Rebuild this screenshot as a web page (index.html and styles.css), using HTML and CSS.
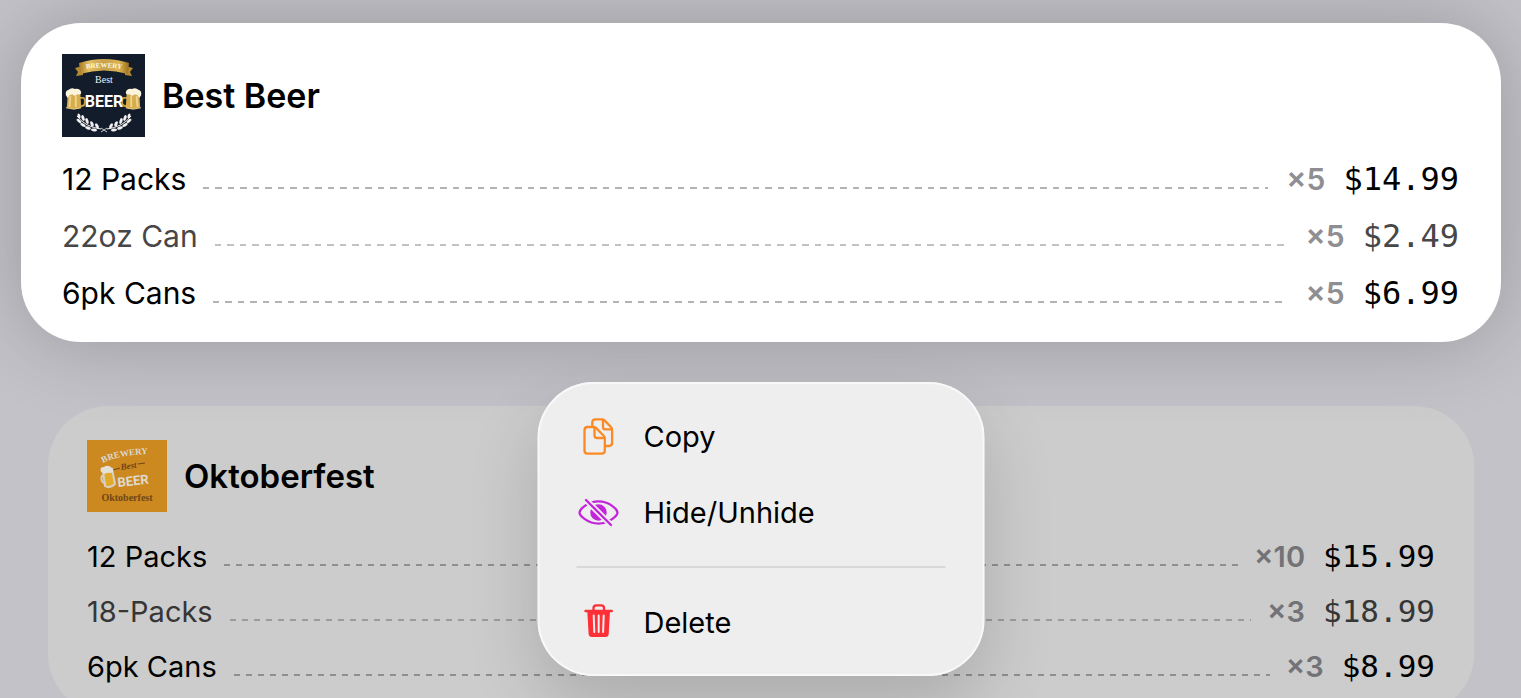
FILE: index.html
```html
<!DOCTYPE html>
<html lang="en">
<head>
<meta charset="utf-8">
<meta name="viewport" content="width=device-width, initial-scale=1">
<title>Best Beer</title>
<link rel="stylesheet" href="styles.css">
</head>
<body>
<main class="screen">
  <article class="card card-focused">
    <header class="card-header">
      <svg class="logo" viewBox="0 0 83 83" role="img" aria-label="Best Beer logo">
        <defs>
          <linearGradient id="gold" x1="0" x2="1">
            <stop offset="0" stop-color="#a87b25"/><stop offset=".2" stop-color="#e3bf62"/>
            <stop offset=".5" stop-color="#c9a14a"/><stop offset=".8" stop-color="#dcb452"/>
            <stop offset="1" stop-color="#9b6f1f"/>
          </linearGradient>
          <path id="ribbon-line" d="M16 17Q42 10 68 17"/>
          <g id="mug">
            <path d="M16 11h4q2 0 2 3v3q0 3-4 3h-2" fill="none" stroke="#c79b42" stroke-width="2"/>
            <path d="M3 6L17 5L18 22Q11 25 2 22Z" fill="#d6ad4e"/>
            <path d="M6 9L5 21M12 9V21" stroke="#efd68a" stroke-width="2"/>
            <path d="M1 22Q10 25 18 22" fill="none" stroke="#ecd28a" stroke-width="1"/>
            <path d="M1 8Q0 3 4 2Q7-1 11 1Q17 0 18 5Q18 8 14 7Q11 10 8 7L5 8L3 11Z" fill="#fbf5df"/>
          </g>
          <g id="laurel" fill="#f1f1f1">
            <path d="M0 2Q8 13 24 15" fill="none" stroke="#f1f1f1" stroke-width="1"/>
            <ellipse cx="2" cy="2" rx="1.4" ry="2.500" transform="rotate(-20 2 2)"/>
            <ellipse cx="2" cy="7" rx="3" ry="1.400" transform="rotate(40 2 7)"/>
            <ellipse cx="6" cy="4" rx="1.500" ry="3" transform="rotate(-20 6 4)"/>
            <ellipse cx="6" cy="11" rx="3" ry="1.500" transform="rotate(30 6 11)"/>
            <ellipse cx="10" cy="7" rx="1.500" ry="3" transform="rotate(-20 10 7)"/>
            <ellipse cx="11" cy="14" rx="3" ry="1.500" transform="rotate(20 11 14)"/>
            <ellipse cx="15" cy="10" rx="1.500" ry="3" transform="rotate(-25 15 10)"/>
            <ellipse cx="17" cy="16" rx="3" ry="1.400" transform="rotate(5 17 16)"/>
            <ellipse cx="20" cy="12" rx="1.500" ry="3" transform="rotate(-30 20 12)"/>
          </g>
        </defs>
        <rect width="83" height="83" fill="#131c2a"/>
        <path d="M13 14L21 12V21L14 22L16 18ZM71 14L63 12V21L70 22L68 18Z" fill="#b68a31"/>
        <path d="M17 9Q42 1 67 9L66 20Q42 13 18 20Z" fill="url(#gold)"/>
        <text class="logo-ribbon"><textPath href="#ribbon-line" startOffset="50%">BREWERY</textPath></text>
        <text class="logo-best" x="42" y="29">Best</text>
        <use href="#mug" transform="translate(3 34) scale(.9)"/>
        <use href="#mug" transform="translate(80 34) scale(-.9 .9)"/>
        <text class="logo-beer" x="42" y="53">BEER</text>
        <use href="#laurel" x="15" y="60"/>
        <use href="#laurel" transform="translate(69 60) scale(-1 1)"/>
        <path d="M39 78L45 74M45 78L39 74" stroke="#c9cdd1"/>
      </svg>
      <h2 class="card-title">Best Beer</h2>
    </header>
    <ul class="rows">
      <li class="row"><span class="name">12 Packs</span><span class="leader"></span><span class="qty">×5</span><span class="price">$14.99</span></li>
      <li class="row row-hidden"><span class="name">22oz Can</span><span class="leader"></span><span class="qty">×5</span><span class="price">$2.49</span></li>
      <li class="row"><span class="name">6pk Cans</span><span class="leader"></span><span class="qty">×5</span><span class="price">$6.99</span></li>
    </ul>
    <div class="menu" role="menu">
      <button class="menu-item" type="button" role="menuitem">
        <svg class="icon" viewBox="0 0 44 44" fill="none" stroke="#fb8a24" stroke-width="2.300" stroke-linejoin="round" aria-hidden="true">
          <path d="M15.800 13V8.500Q15.800 5.300 19 5.300H25.500Q27 5.300 28 6.400L34.500 13Q35.600 14.200 35.600 16V28.800Q35.600 32 32.400 32H28.500"/>
          <path d="M26.500 5.500V13Q26.500 15.400 29 15.400H35.500"/>
          <path d="M11.200 13H17Q18.600 13 19.700 14.100L27.200 21.800Q28.300 23 28.300 24.600V36.400Q28.300 39.600 25.100 39.600H11.200Q8 39.600 8 36.400V16.200Q8 13 11.200 13Z"/>
          <path d="M18 13.500V21.500Q18 24 20.500 24H28"/>
        </svg>
        <span>Copy</span>
      </button>
      <button class="menu-item" type="button" role="menuitem">
        <svg class="icon" viewBox="0 0 44 44" fill="none" aria-hidden="true">
          <path d="M3 22.500C3 19.500 11 11.400 22 11.400S41 19.500 41 22.500S33 33.600 22 33.600S3 25.500 3 22.500Z" stroke="#c324dc" stroke-width="2.300"/>
          <circle cx="22" cy="22.500" r="8.200" fill="#c324dc"/>
          <path d="M9 9.500L35 35.500" stroke="#eee" stroke-width="6"/>
          <path d="M9.500 10L34.500 35" stroke="#c324dc" stroke-width="2.300" stroke-linecap="round"/>
        </svg>
        <span>Hide/Unhide</span>
      </button>
      <hr class="menu-divider">
      <button class="menu-item" type="button" role="menuitem">
        <svg class="icon" viewBox="0 0 44 44" fill="none" aria-hidden="true">
          <path d="M17 11V8Q17 5.300 19.700 5.300H24.800Q27.500 5.300 27.500 8V11" stroke="#fd2f37" stroke-width="2.300"/>
          <path d="M9 11H35.300" stroke="#fd2f37" stroke-width="2.400" stroke-linecap="round"/>
          <path d="M10.800 11H33.500L32.200 33.700Q32 37 28.800 37H15.500Q12.300 37 12.100 33.700Z" fill="#fd2f37"/>
          <path d="M17.200 15.500L17.800 32M22.200 15.500V32M27.200 15.500L26.600 32" stroke="#eeeef0" stroke-width="2" stroke-linecap="round"/>
        </svg>
        <span>Delete</span>
      </button>
    </div>
  </article>

  <article class="card card-dimmed">
    <header class="card-header">
      <svg class="logo" viewBox="0 0 80 72" role="img" aria-label="Oktoberfest logo">
        <rect width="80" height="72" fill="#cb891f"/>
        <path id="arch" d="M16 23Q34 14 66 14" fill="none"/>
        <text class="okt-brewery"><textPath href="#arch">BREWERY</textPath></text>
        <path d="M26 30L33 28M51 24L58 23" stroke="#704518"/>
        <text class="okt-best" x="34" y="30" transform="rotate(-8 34 30)">Best</text>
        <text class="okt-beer" x="31" y="47" transform="rotate(-6 31 47)">BEER</text>
        <path d="M16 31L25 29L28 44Q23 49 18 46Z" fill="#e3a92a" stroke="#d6d1c4" stroke-width="2"/>
        <path d="M17 35Q13 36 15 41Q16 44 19 43" fill="none" stroke="#d6d1c4" stroke-width="2"/>
        <path d="M14 32Q12 27 17 27Q21 24 25 28Q28 31 24 33Q20 32 18 34Z" fill="#e4e0d6"/>
        <text class="okt-name" x="40" y="61">Oktoberfest</text>
      </svg>
      <h2 class="card-title">Oktoberfest</h2>
    </header>
    <ul class="rows">
      <li class="row"><span class="name">12 Packs</span><span class="leader"></span><span class="qty">×10</span><span class="price">$15.99</span></li>
      <li class="row row-hidden"><span class="name">18-Packs</span><span class="leader"></span><span class="qty">×3</span><span class="price">$18.99</span></li>
      <li class="row"><span class="name">6pk Cans</span><span class="leader"></span><span class="qty">×3</span><span class="price">$8.99</span></li>
    </ul>
  </article>
</main>
</body>
</html>
```
FILE: styles.css
```css
* {
  box-sizing: border-box;
}

body {
  margin: 0;
  height: 100vh;
  overflow: hidden;
  background: #c3c2c8;
  color: #000;
  font-family: Inter, "Liberation Sans", sans-serif;
}

.screen {
  display: flex;
  flex-direction: column;
  gap: 64px;
  padding: 23px 20px 0 21px;
}

.card {
  border-radius: 60px;
}

.card-focused {
  position: relative;
  z-index: 1;
  padding: 31px 42px 20px 41px;
  background: #fff;
  box-shadow: 0 0 80px rgba(0, 0, 0, 0.22);
}

.card-dimmed {
  margin: 0 27px;
  padding: 34px 39px 20px;
  background: #ccc;
}

.card-header {
  display: flex;
  align-items: center;
  gap: 17px;
}

.card-focused .logo {
  width: 83px;
  height: 83px;
}

.card-dimmed .logo {
  width: 80px;
  height: 72px;
}

.card-title {
  margin: 0;
  font-size: 34px;
  line-height: 40px;
  font-weight: 600;
}

.card-dimmed .card-title {
  font-size: 33px;
}

.rows {
  list-style: none;
  margin: 0;
  padding: 0;
}

.card-focused .rows {
  margin-top: 14px;
}

.card-dimmed .rows {
  margin-top: 17px;
}

.row {
  display: flex;
  align-items: center;
  font-size: 30px;
  line-height: 57px;
}

.card-dimmed .row {
  font-size: 29px;
  line-height: 55px;
}

.row-hidden {
  color: #474747;
}

.card-dimmed .row-hidden {
  color: #363636;
}

.leader {
  flex: 1;
  height: 2px;
  margin: 16px 18px 0 17px;
  background: repeating-linear-gradient(to right, #b3b3b3 0 6px, transparent 6px 12px, #b3b3b3 12px 19px, transparent 19px 25px);
}

.row-hidden .leader {
  opacity: 0.8;
}

.card-dimmed .leader {
  margin-right: 16px;
  background: repeating-linear-gradient(to right, #8f8f8f 0 6px, transparent 6px 12px);
}

.qty {
  margin-right: 18px;
  color: #8e8e93;
  font-weight: 600;
}

.card-dimmed .qty {
  color: #737377;
}

.price {
  font-family: "DejaVu Sans Mono", monospace;
  font-size: 32px;
}

.card-dimmed .price {
  font-size: 31px;
}

.menu {
  position: absolute;
  top: calc(100% + 40px);
  left: 50%;
  transform: translateX(-50%);
  width: 447px;
  padding: 16px 39px;
  border-radius: 56px;
  background: #eeeeef;
  box-shadow: inset 0 0 0 2px #f8f8f9, 0 30px 70px rgba(0, 0, 0, 0.16);
}

.menu-item {
  display: flex;
  align-items: center;
  gap: 23px;
  width: 100%;
  height: 76px;
  padding: 0;
  border: 0;
  background: none;
  color: #000;
  font: inherit;
  font-size: 29px;
  text-align: left;
}

.icon {
  width: 44px;
  height: 44px;
}

.menu-divider {
  height: 2px;
  margin: 16px 0;
  border: 0;
  background: #d8d8da;
}

.logo-ribbon {
  font: bold 7px "Liberation Serif", serif;
  fill: #fff8dc;
  text-anchor: middle;
}

.logo-best {
  font: 10px "Liberation Serif", serif;
  fill: #eef0f2;
  text-anchor: middle;
}

.logo-beer {
  font: bold 16px Roboto, sans-serif;
  fill: #fff;
  text-anchor: middle;
}

.okt-brewery {
  font: bold 9px "Liberation Serif", serif;
  fill: #dcd8ce;
}

.okt-best {
  font: italic bold 9px "Liberation Serif", serif;
  fill: #704518;
}

.okt-beer {
  font: bold 13px Roboto, sans-serif;
  fill: #dedad0;
}

.okt-name {
  font: bold 10px "Liberation Serif", serif;
  fill: #704518;
  text-anchor: middle;
}
```
